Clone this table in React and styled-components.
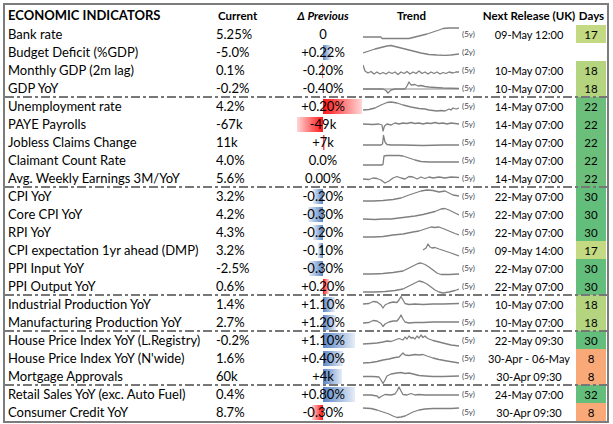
import React from 'react';
import styled, { createGlobalStyle } from 'styled-components';

const GlobalStyle = createGlobalStyle`
  body {
    margin: 0;
    background: #fff;
    font-family: Lato, "Open Sans", sans-serif;
    color: #000;
  }
`;

const COLS = '205px 75px 76px 121px 94px 31px';
const AXIS = 38; // data bar axis, px from the left of the delta cell

const Frame = styled.div`
  box-sizing: border-box;
  width: 606px;
  margin: 3px 0 0 3px;
  border: 2px solid #7c7c7c;
  background: #fff;
`;

const HeadRow = styled.div`
  display: grid;
  grid-template-columns: ${COLS};
  height: 20px;
  align-items: center;
  font-size: 11.5px;
  font-weight: 700;
`;

const Group = styled.div`
  position: relative;
  &::before {
    content: '';
    display: ${(p) => (p.$sep ? 'block' : 'none')};
    position: absolute;
    left: 0;
    right: 0;
    top: -1px;
    height: 2px;
    z-index: 3;
    background: repeating-linear-gradient(
      to right,
      #777 0 9px,
      transparent 9px 12px,
      #777 12px 15px,
      transparent 15px 18px
    );
  }
`;

const Row = styled.div`
  display: grid;
  grid-template-columns: ${COLS};
  height: 18px;
  align-items: center;
  font-size: 13px;
`;

const Title = styled.span`
  padding-left: 3px;
  font-size: 13px;
  font-weight: 700;
  white-space: nowrap;
`;

const HeadCell = styled.span`
  text-align: ${(p) => p.$align || 'center'};
  padding-left: ${(p) => p.$pad || 0}px;
  padding-right: ${(p) => p.$padR || 0}px;
  font-style: ${(p) => (p.$italic ? 'italic' : 'normal')};
  white-space: nowrap;
`;

const Label = styled.span`
  padding-left: 3px;
  white-space: nowrap;
`;

const Current = styled.span`
  padding-left: 6px;
`;

const Delta = styled.div`
  position: relative;
  height: 18px;
  display: flex;
  align-items: center;
  justify-content: center;
`;

const DeltaText = styled.span`
  position: relative;
  z-index: 1;
`;

const Bar = styled.div`
  position: absolute;
  top: 1.5px;
  height: 15px;
  ${(p) => (p.$neg ? `right: ${76 - AXIS}px;` : `left: ${AXIS}px;`)}
  background: linear-gradient(
    ${(p) => (p.$neg ? 'to left' : 'to right')},
    ${(p) => (p.$red ? '#ff1414' : '#5b86c4')},
    ${(p) => (p.$red ? '#ffd6d6' : '#e6edf7')}
  );
`;

const Trend = styled.div`
  display: flex;
  align-items: center;
  gap: 3px;
  padding-left: 2px;
`;

const Span = styled.span`
  font-size: 8px;
  color: #3d4450;
`;

const Release = styled.span`
  text-align: center;
  font-size: 11px;
  white-space: nowrap;
`;

const Days = styled.div`
  height: 18px;
  display: flex;
  align-items: center;
  justify-content: center;
  margin-right: 1px;
  font-size: 11.5px;
  background: ${(p) => p.$bg || 'transparent'};
`;

const dayColor = {
  8: '#f9a877',
  17: '#c3d982',
  18: '#b4d47f',
  22: '#6cbf7a',
  30: '#64be7b',
  32: '#63be7b',
};

const Spark = ({ pts, axis }) => (
  <svg width="96" height="16" viewBox="0 0 96 16">
    {axis !== undefined && (
      <line x1="0" y1={axis} x2="96" y2={axis} stroke="#8a8a8a" strokeWidth="1.1" />
    )}
    <polyline points={pts} fill="none" stroke="#808080" strokeWidth="1.3" strokeLinejoin="round" />
  </svg>
);

const groups = [
  [
    { label: 'Bank rate', cur: '5.25%', d: '0', bar: 0, rel: '09-May 12:00', days: 17,
      pts: '0,11 18,11 19,12.5 46,12.5 52,11 58,9.5 64,8 70,6 76,4 80,2.5 86,2 96,2' },
    { label: 'Budget Deficit (%GDP)', cur: '-5.0%', d: '+0.22%', bar: 8, span: '2y',
      pts: '0,9 6,7 12,5 18,3.5 24,2 28,1.5 34,3 42,5 50,7 58,9 66,10.5 74,11 82,11.3 88,11 96,10' },
    { label: 'Monthly GDP (2m lag)', cur: '0.1%', d: '-0.20%', bar: -1.5, red: true, rel: '10-May 07:00', days: 18,
      pts: '0,3 2,9 5,11 8,9.5 11,12 14,10 17,12 20,10.5 23,12 26,10 29,11.5 32,10 35,12.5 38,10 41,11.5 44,9.5 47,12 50,10 53,11.5 56,9 59,11.5 62,10 65,12 68,10 71,11.5 74,10 77,12 80,10.5 83,11.5 86,10 90,11 93,10 96,10' },
    { label: 'GDP YoY', cur: '-0.2%', d: '-0.40%', bar: 0, rel: '10-May 07:00', days: 18, axis: 9,
      pts: '0,9 20,9 23,10.5 25,13 28,10 32,9 42,9 44,6 46,2 48,5 52,4.5 55,6 58,5.5 62,6.5 66,7 72,7.5 80,8 96,8.5' },
  ],
  [
    { label: 'Unemployment rate', cur: '4.2%', d: '+0.20%', bar: 39, red: true, rel: '14-May 07:00', days: 22,
      pts: '0,12 6,11.5 12,10 18,7 24,4.5 28,4 34,5 40,7 48,9 56,10.5 62,11 66,12 70,12.5 74,13 78,12.5 82,13 86,11 88,12 90,10 93,11 96,10' },
    { label: 'PAYE Payrolls', cur: '-67k', d: '-49k', bar: -26, red: true, rel: '14-May 07:00', days: 22,
      pts: '0,8 10,8.5 16,8 19,9 20,15 21.5,10 24,8 28,9 32,7 36,8 40,7 44,7.5 48,6.5 52,7.5 56,7 60,8 64,7 68,7.5 72,6.5 76,7.5 80,7 84,8 88,7 92,7.5 96,8' },
    { label: 'Jobless Claims Change', cur: '11k', d: '+7k', bar: 2, red: true, rel: '14-May 07:00', days: 22,
      pts: '0,11 14,11 18,11 19.5,10 20.5,1.5 22,8 24,10.5 28,11 40,11 60,11.5 80,11 96,11' },
    { label: 'Claimant Count Rate', cur: '4.0%', d: '0.0%', bar: 0, rel: '14-May 07:00', days: 22,
      pts: '0,13 18,13 20,12.5 21,4 24,3.5 36,3.5 40,4 46,6 52,8 58,9.5 66,10 80,10 96,10' },
    { label: 'Avg. Weekly Earnings 3M/YoY', cur: '5.6%', d: '0.00%', bar: 0, rel: '14-May 07:00', days: 22,
      pts: '0,9 6,9.5 10,8 14,8.5 18,10 22,13 26,11 30,8 34,6.5 38,8 42,9 46,6.5 50,7 54,9 58,7 62,8.5 66,7 70,8 76,7 82,8 88,7 96,7.5' },
  ],
  [
    { label: 'CPI  YoY', cur: '3.2%', d: '-0.20%', bar: -10, rel: '22-May 07:00', days: 30,
      pts: '0,13 10,13 20,12.5 30,11.5 38,10 46,7 52,5 58,3 64,2 70,2.5 76,4 82,3 86,5 90,7 96,8' },
    { label: 'Core CPI YoY', cur: '4.2%', d: '-0.30%', bar: -15, rel: '22-May 07:00', days: 30,
      pts: '0,13 12,13.5 20,13 28,13 36,12 44,11 52,10 60,8.5 66,7 72,5.5 78,3 82,2.5 86,4 90,6 96,9' },
    { label: 'RPI  YoY', cur: '4.3%', d: '-0.20%', bar: -10, rel: '22-May 07:00', days: 30,
      pts: '0,13 10,13 20,12.5 30,11 40,10 50,8 56,7 62,5 68,3 72,3.5 76,3 80,4.5 86,7 92,9.5 96,11' },
    { label: 'CPI expectation 1yr ahead (DMP)', cur: '3.2%', d: '-0.10%', bar: -5, rel: '09-May 14:00', days: 17,
      pts: '60,8 63,6 65,2 67,5 69,6 72,5.5 76,7 82,9 88,11 96,14' },
    { label: 'PPI Input YoY', cur: '-2.5%', d: '-0.30%', bar: -14, rel: '22-May 07:00', days: 30,
      pts: '0,14 10,14 20,13.5 30,12.5 40,11 46,8 52,5 55,3.5 58,3 62,4.5 66,7 70,10 74,13 78,14.5 86,14.5 96,14' },
    { label: 'PPI Output YoY', cur: '0.6%', d: '+0.20%', bar: 6, red: true, rel: '22-May 07:00', days: 30,
      pts: '0,14 12,14 22,13.5 32,12.5 40,11 46,8 52,5 56,3 60,4 64,6 68,9 72,12 76,14 80,15 86,14 92,12.5 96,11' },
  ],
  [
    { label: 'Industrial Production YoY', cur: '1.4%', d: '+1.10%', bar: 12, rel: '10-May 07:00', days: 18,
      pts: '0,8 6,7.5 10,5.5 14,6 18,9 20,12 22,9 26,7 30,6 34,6.5 36,4 38,0.5 40,4 42,7.5 46,8.5 52,8 60,8.5 70,8 80,8 96,7.5' },
    { label: 'Manufacturing Production YoY', cur: '2.7%', d: '+1.20%', bar: 13, rel: '10-May 07:00', days: 18,
      pts: '0,9 6,8.5 10,6.5 14,7 18,9.5 20,12.5 22,10 26,8 30,7 34,7 36,4.5 38,1 40,5 42,8 46,9 52,8.5 60,8.5 70,8 80,8 96,8' },
  ],
  [
    { label: 'House Price Index YoY (L.Registry)', cur: '-0.2%', d: '+1.10%', bar: 32, rel: '22-May 09:30', days: 30,
      pts: '0,12 8,11.5 14,11 20,10 24,9 28,9.5 32,8 36,6.5 40,8 42,5 44,7 46,4 48,6 50,5.5 52,7 54,4 56,6 58,3 60,5.5 62,4 64,6 66,7 70,8.5 76,10 82,11.5 88,13 96,14' },
    { label: "House Price Index YoY (N'wide)", cur: '1.6%', d: '+0.40%', bar: 20, rel: '30-Apr - 06-May', days: 8,
      pts: '0,13 8,12.5 14,11.5 20,10 26,9 32,7.5 36,7 38,5 40,3 42,5 46,5.5 52,4.5 56,5 60,4.5 64,6 70,8 76,9.5 84,11 90,12 96,13' },
    { label: 'Mortgage Approvals', cur: '60k', d: '+4k', bar: 19, rel: '30-Apr 09:30', days: 8,
      pts: '0,8.5 10,8.5 16,9 18,12 20,15.5 22,12 24,8 28,6 34,5 38,4.5 42,5.5 46,5 50,6 56,7.5 62,8 70,8.5 80,8.5 96,8' },
  ],
  [
    { label: 'Retail Sales YoY (exc. Auto Fuel)', cur: '0.4%', d: '+0.80%', bar: 32, rel: '24-May 07:00', days: 32,
      pts: '0,9 8,9 14,10 16,12 18,10.5 22,8.5 28,9 32,8 34,5 36,1 38,5 40,8.5 44,9 48,7.5 52,9 56,8.5 62,9 70,9 80,9 96,9' },
    { label: 'Consumer Credit YoY', cur: '8.7%', d: '-0.30%', bar: -11, red: true, rel: '30-Apr 09:30', days: 8,
      pts: '0,4 8,4.5 14,6 20,8 26,10 30,12 34,13.5 38,13 42,12 46,10 50,8 56,6 62,5 70,4.5 80,4.5 88,4.5 96,4' },
  ],
];

export default function App() {
  return (
    <>
      <GlobalStyle />
      <Frame>
        <HeadRow>
          <Title>ECONOMIC INDICATORS</Title>
          <HeadCell $align="left" $pad={8}>Current</HeadCell>
          <HeadCell $italic>Δ Previous</HeadCell>
          <HeadCell $padR={20}>Trend</HeadCell>
          <HeadCell>Next Release (UK)</HeadCell>
          <HeadCell>Days</HeadCell>
        </HeadRow>
        {groups.map((rows, gi) => (
          <Group key={gi} $sep={gi > 0}>
            {rows.map((r) => (
              <Row key={r.label}>
                <Label>{r.label}</Label>
                <Current>{r.cur}</Current>
                <Delta>
                  {r.bar !== 0 && (
                    <Bar $neg={r.bar < 0} $red={r.red} style={{ width: Math.abs(r.bar) }} />
                  )}
                  <DeltaText>{r.d}</DeltaText>
                </Delta>
                <Trend>
                  <Spark pts={r.pts} axis={r.axis} />
                  <Span>({r.span || '5y'})</Span>
                </Trend>
                <Release>{r.rel || ''}</Release>
                <Days $bg={r.days ? dayColor[r.days] : null}>{r.days || ''}</Days>
              </Row>
            ))}
          </Group>
        ))}
      </Frame>
    </>
  );
}
